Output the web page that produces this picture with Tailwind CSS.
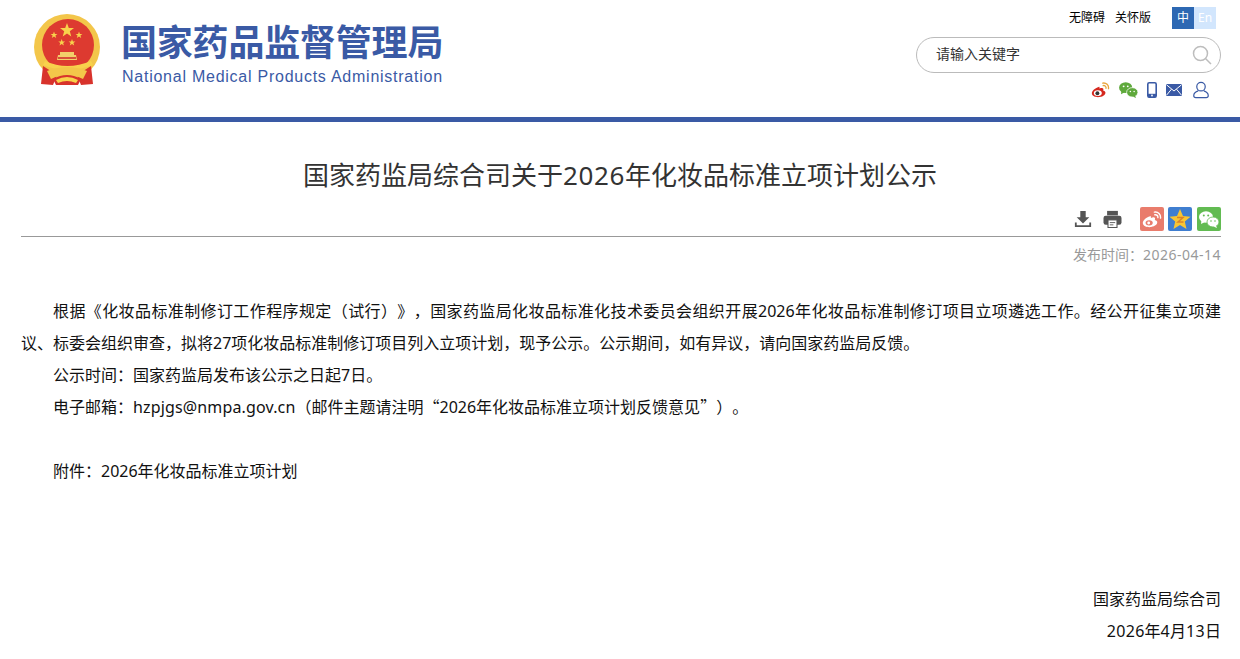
<!DOCTYPE html>
<html lang="zh-CN">
<head>
  <meta charset="UTF-8" />
  <meta name="viewport" content="width=device-width, initial-scale=1.0" />
  <title>国家药监局综合司关于2026年化妆品标准立项计划公示</title>
  <script src="https://cdn.jsdelivr.net/npm/@tailwindcss/browser@4"></script>
</head>
<body class="bg-white text-black font-['Noto_Sans','Noto_Sans_CJK_SC',sans-serif] [text-spacing-trim:space-all] overflow-hidden">

  <!-- 页头 -->
  <header class="h-[122px] border-b-[5px] border-[#3a5aa5] flex justify-between pl-[33px] pr-[19px]">
    <div class="flex items-start">
      <svg width="68" height="74" viewBox="0 0 68 74" class="mt-[13px]">
        <circle cx="34" cy="34" r="33" fill="#f3c64a"/>
        <circle cx="35" cy="32" r="26" fill="#dd3a30"/>
        <path d="M34 10 l1.800 5 h5.200 l-4.200 3.200 1.500 5.200 -4.300 -3 -4.300 3 1.500 -5.200 -4.200 -3.200 h5.200z" fill="#f8d24c"/>
        <path d="M21 18.500 l.9 2.400 h2.500 l-2 1.500 .8 2.500 -2.200 -1.500 -2.200 1.500 .8 -2.500 -2 -1.500 h2.500z" fill="#f8d24c"/>
        <path d="M46 18.500 l.9 2.400 h2.500 l-2 1.500 .8 2.500 -2.200 -1.500 -2.200 1.500 .8 -2.500 -2 -1.500 h2.500z" fill="#f8d24c"/>
        <path d="M28.700 26 l.9 2.400 h2.500 l-2 1.500 .8 2.500 -2.200 -1.500 -2.200 1.500 .8 -2.500 -2 -1.500 h2.500z" fill="#f8d24c"/>
        <path d="M39 26 l.9 2.400 h2.500 l-2 1.500 .8 2.500 -2.200 -1.500 -2.200 1.500 .8 -2.500 -2 -1.500 h2.500z" fill="#f8d24c"/>
        <path d="M27 39 h14 v3 h2 l1 5 h-20 l1 -5 h2 z" fill="#f2cf6a"/>
        <path d="M25 44 h18 v2 h-18z" fill="#d8503a"/>
        <path d="M12 48 Q34 58 58 48 L60 52 Q34 62 10 52 Z" fill="#f8d24c"/>
        <path d="M10 53 L8 71 L20 72 L24 62 Z M58 53 L60 71 L48 72 L44 62 Z" fill="#d8332c"/>
        <path d="M14 58 Q34 50 54 58 L50 66 Q34 58 18 66 Z" fill="#f3c64a"/>
        <path d="M20 66 Q34 58 48 66 L45 72 H23 Z" fill="#d8332c"/>
        <path d="M23 67 Q34 61 45 67 L43 70 Q34 66 25 70 Z" fill="#f8d24c"/>
      </svg>
      <div class="ml-[20px] mt-[19px]">
        <h1 class="text-[36px] leading-[48px] font-bold text-[#3a5aa5] tracking-[-0.2px] whitespace-nowrap">国家药品监督管理局</h1>
        <p class="font-['Liberation_Sans'] pl-[1px] text-[16px] leading-[20px] text-[#3a5aa5] tracking-[0.75px] whitespace-nowrap">National Medical Products Administration</p>
      </div>
    </div>

    <div class="w-[305px] flex flex-col items-stretch">
      <div class="flex justify-end items-start h-[30px] pt-[7px] pr-[5px]">
        <a class="text-[12px] leading-[20px] mt-[1px] mr-[10px]">无障碍</a>
        <a class="text-[12px] leading-[20px] mt-[1px] mr-[21px]">关怀版</a>
        <span class="w-[22px] h-[22px] bg-[#2d68b3] text-white text-[12px] leading-[22px] text-center">中</span>
        <span class="w-[22px] h-[22px] bg-[#d2e6fd] text-white text-[12px] leading-[22px] text-center">En</span>
      </div>
      <div class="h-[36px] mt-[7px] rounded-full border border-[#bbbbbb] flex items-center justify-between pl-[19px] pr-[8px]">
        <span class="text-[14px] text-[#333333] leading-[20px] -mt-[2px]">请输入关键字</span>
        <svg width="20" height="20" viewBox="0 0 20 20" fill="none" stroke="#bdbdbd" stroke-width="1.500">
          <circle cx="8.500" cy="8.500" r="7"/>
          <path d="M13.500 13.500 L19 19"/>
        </svg>
      </div>
      <div class="flex justify-end items-center gap-[9px] mt-[7px] h-[20px] pr-[12px]">
        <!-- 微博 -->
        <svg width="19" height="16" viewBox="0 0 21 18">
          <path d="M8.500 5.500 C4 7 .5 10 .8 13 C1.200 16.500 6 17.500 9.500 17 C14 16.300 16.500 13.800 16 11.500 C15.600 10 14 9.800 13.500 9.500 C14.300 7.500 13.500 6.300 11 6.800 C10 7 9.500 7.500 9.300 7.200 C9.600 5.500 9.300 5.300 8.500 5.500Z" fill="#d5281e"/>
          <ellipse cx="7.500" cy="12.500" rx="4.500" ry="3.300" fill="#fff"/>
          <circle cx="7" cy="12.700" r="2.200" fill="#333"/>
          <path d="M13 1.200 C17 .5 20 3.500 19.500 7.500 M13.500 4 C15.500 3.700 17 5 16.700 7" fill="none" stroke="#e9a53b" stroke-width="1.500" stroke-linecap="round"/>
        </svg>
        <!-- 微信 -->
        <svg width="19" height="16" viewBox="0 0 20 17">
          <ellipse cx="7" cy="6" rx="7" ry="5.800" fill="#5fa93c"/>
          <path d="M2.500 9 L2 13 L6 11 Z" fill="#5fa93c"/>
          <ellipse cx="14" cy="11" rx="6" ry="5" fill="#5fa93c" stroke="#fff" stroke-width=".8"/>
          <path d="M17 14.500 L18 17 L14.500 15.500 Z" fill="#5fa93c"/>
          <circle cx="4.800" cy="4.600" r="1" fill="#fff"/><circle cx="9.200" cy="4.600" r="1" fill="#fff"/>
          <circle cx="12" cy="10" r=".8" fill="#fff"/><circle cx="16" cy="10" r=".8" fill="#fff"/>
        </svg>
        <!-- 手机 -->
        <svg width="10" height="16" viewBox="0 0 10 16">
          <rect x=".8" y=".8" width="8.400" height="14.400" rx="1.400" fill="none" stroke="#3a5aa5" stroke-width="1.600"/>
          <rect x="1" y="11.800" width="8" height="3.400" fill="#3a5aa5"/>
          <circle cx="5" cy="13.500" r=".9" fill="#fff"/>
        </svg>
        <!-- 邮件 -->
        <svg width="16" height="12" viewBox="0 0 16 12">
          <rect width="16" height="12" rx="1" fill="#3a5aa5"/>
          <path d="M.5 .8 L8 7 L15.500 .8 M.5 11.200 L5.500 5.200 M15.500 11.200 L10.500 5.200" fill="none" stroke="#fff" stroke-width="1"/>
        </svg>
        <!-- 用户 -->
        <svg width="16" height="18" viewBox="0 0 17 18" fill="none" stroke="#3a5aa5" stroke-width="1.300" class="ml-[2px]">
          <circle cx="8.500" cy="5.500" r="4.500"/>
          <path d="M5.500 10 C2.500 11 .8 13 .8 15 C.8 16.500 1.800 17 3 17 H14 C15.200 17 16.200 16.500 16.200 15 C16.200 13 14.500 11 11.500 10"/>
        </svg>
      </div>
    </div>
  </header>

  <main class="px-[19px]">
    <h2 class="mt-[33px] text-[26px] leading-[40px] text-[#333333] text-center">国家药监局综合司关于<span class="tracking-[0.6px]">2026</span>年化妆品标准立项计划公示</h2>

    <!-- 工具栏 -->
    <div class="mt-[12px] h-[30px] ml-[2px] border-b border-[#999999] flex justify-end items-start">
      <svg width="18" height="18" viewBox="0 0 20 20" class="mt-[3px] mr-[11px]" fill="#555555">
        <path d="M7 1 h6 v7 h4 l-7 7 -7 -7 h4z"/>
        <path d="M1 14 v5 h18 v-5 h-2 v3 H3 v-3z"/>
      </svg>
      <svg width="19" height="18" viewBox="0 0 20 20" class="mt-[3px] mr-[18px]">
        <path d="M4 1 h12 v5 h-12z" fill="#555555"/>
        <rect y="6.500" width="20" height="10" rx="2.500" fill="#555555"/>
        <rect x="5" y="11" width="10" height="8.500" fill="#fff" stroke="#555555" stroke-width="1.200"/>
        <path d="M7 14 h6 M7 16.500 h4" stroke="#555555" stroke-width="1"/>
      </svg>
      <span class="w-[24px] h-[24px] rounded-[2px] bg-[#e97c6c] flex items-center justify-center">
        <svg width="20" height="17" viewBox="0 0 21 18">
          <path d="M8.500 5.500 C4 7 .5 10 .8 13 C1.200 16.500 6 17.500 9.500 17 C14 16.300 16.500 13.800 16 11.500 C15.600 10 14 9.800 13.500 9.500 C14.300 7.500 13.500 6.300 11 6.800 C10 7 9.500 7.500 9.300 7.200 C9.600 5.500 9.300 5.300 8.500 5.500Z" fill="#fff"/>
          <ellipse cx="7.500" cy="12.500" rx="3.800" ry="2.800" fill="#e97c6c"/>
          <circle cx="7" cy="12.700" r="1.500" fill="#fff"/>
          <path d="M13 1.200 C17 .5 20 3.500 19.500 7.500 M13.500 4 C15.500 3.700 17 5 16.700 7" fill="none" stroke="#fff" stroke-width="1.500" stroke-linecap="round"/>
        </svg>
      </span>
      <span class="w-[24px] h-[24px] ml-[4px] rounded-[2px] bg-[#3f7ed0] flex items-center justify-center">
        <svg width="22" height="22" viewBox="0 0 22 22">
          <path d="M11 1 L14 8 L21.500 8.700 L15.800 13.600 L17.500 21 L11 17 L4.500 21 L6.200 13.600 L.5 8.700 L8 8 Z" fill="#f8c533"/>
          <path d="M8 9.500 H14 L9 14 H14.500" fill="none" stroke="#d9822b" stroke-width="1.500"/>
        </svg>
      </span>
      <span class="w-[24px] h-[24px] ml-[5px] rounded-[2px] bg-[#62bb52] flex items-center justify-center">
        <svg width="20" height="17" viewBox="0 0 20 17">
          <ellipse cx="7" cy="6" rx="7" ry="5.800" fill="#fff"/>
          <path d="M2.500 9 L2 13 L6 11 Z" fill="#fff"/>
          <ellipse cx="14" cy="11" rx="6" ry="5" fill="#fff" stroke="#62bb52" stroke-width=".8"/>
          <path d="M17 14.500 L18 17 L14.500 15.500 Z" fill="#fff"/>
          <circle cx="4.800" cy="4.600" r="1" fill="#62bb52"/><circle cx="9.200" cy="4.600" r="1" fill="#62bb52"/>
          <circle cx="12" cy="10" r=".8" fill="#62bb52"/><circle cx="16" cy="10" r=".8" fill="#62bb52"/>
        </svg>
      </span>
    </div>

    <p class="mt-[7px] text-right text-[14px] leading-[22px] text-[#999999]">发布时间：<span class="tracking-[0.5px]">2026-04-14</span></p>

    <!-- 正文 -->
    <article class="mt-[29px] ml-[2px] text-[16px] leading-[32px] text-[#111111]">
      <p class="indent-[32px] text-justify">根据《化妆品标准制修订工作程序规定（试行）》，国家药监局化妆品标准化技术委员会组织开展2026年化妆品标准制修订项目立项遴选工作。经公开征集立项建议、标委会组织审查，拟将27项化妆品标准制修订项目列入立项计划，现予公示。公示期间，如有异议，请向国家药监局反馈。</p>
      <p class="indent-[32px]">公示时间：国家药监局发布该公示之日起7日。</p>
      <p class="indent-[32px]">电子邮箱：<span class="tracking-[0.15px]">hzpjgs@nmpa.gov.cn</span>（邮件主题请注明<span class="font-['Noto_Sans_CJK_SC'] leading-[0]">“</span>2026年化妆品标准立项计划反馈意见<span class="font-['Noto_Sans_CJK_SC'] leading-[0]">”</span>）。</p>
      <p class="indent-[32px] mt-[32px]">附件：2026年化妆品标准立项计划</p>
      <p class="text-right mt-[96px]">国家药监局综合司</p>
      <p class="text-right"><span class="tracking-[0.3px]">2026</span>年<span class="tracking-[0.3px]">4</span>月<span class="tracking-[0.3px]">13</span>日</p>
    </article>
  </main>
</body>
</html>
